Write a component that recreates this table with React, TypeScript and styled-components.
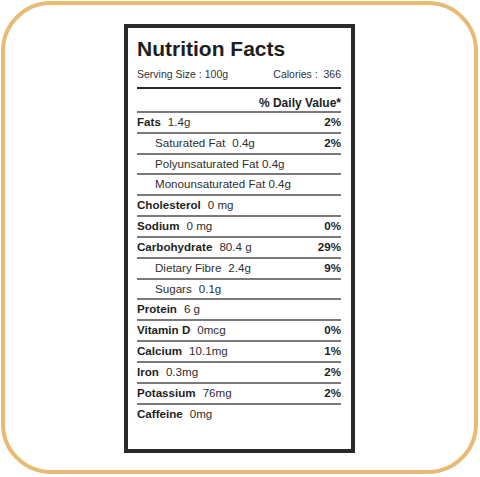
import React from "react";
import styled, { createGlobalStyle } from "styled-components";

type Nutrient = {
  name: string;
  amount: string;
  daily?: string;
  sub?: boolean;
  plain?: boolean;
};

const nutrients: Nutrient[] = [
  { name: "Fats", amount: "1.4g", daily: "2%" },
  { name: "Saturated Fat", amount: "0.4g", daily: "2%", sub: true },
  { name: "Polyunsaturated Fat 0.4g", amount: "", sub: true, plain: true },
  { name: "Monounsaturated Fat 0.4g", amount: "", sub: true, plain: true },
  { name: "Cholesterol", amount: "0 mg" },
  { name: "Sodium", amount: "0 mg", daily: "0%" },
  { name: "Carbohydrate", amount: "80.4 g", daily: "29%" },
  { name: "Dietary Fibre", amount: "2.4g", daily: "9%", sub: true },
  { name: "Sugars", amount: "0.1g", sub: true },
  { name: "Protein", amount: "6 g" },
  { name: "Vitamin D", amount: "0mcg", daily: "0%" },
  { name: "Calcium", amount: "10.1mg", daily: "1%" },
  { name: "Iron", amount: "0.3mg", daily: "2%" },
  { name: "Potassium", amount: "76mg", daily: "2%" },
  { name: "Caffeine", amount: "0mg" },
];

const App = () => {
  return (
    <>
      <GlobalStyle />
      <Frame>
        <Label>
          <Title>Nutrition Facts</Title>
          <Serving>
            <span>Serving Size : 100g</span>
            <span>Calories :&nbsp; 366</span>
          </Serving>
          <ThickRule />
          <DailyHead>% Daily Value*</DailyHead>
          {nutrients.map((n) => (
            <Row key={n.name} sub={n.sub}>
              <Left>
                {n.plain ? (
                  <Amount>{n.name}</Amount>
                ) : n.sub ? (
                  <>
                    <Amount>{n.name}</Amount>
                    <Amount gap>{n.amount}</Amount>
                  </>
                ) : (
                  <>
                    <Name>{n.name}</Name>
                    <Amount gap>{n.amount}</Amount>
                  </>
                )}
              </Left>
              {n.daily && <Daily>{n.daily}</Daily>}
            </Row>
          ))}
        </Label>
      </Frame>
    </>
  );
};

export default App;

const GlobalStyle = createGlobalStyle`
  body {
    margin: 0;
    background: #fff;
    font-family: "Liberation Sans", Arial, sans-serif;
  }
`;

const Frame = styled.div`
  box-sizing: border-box;
  margin: 1px 0 0 1px;
  width: 477px;
  height: 473px;
  border: 4px solid #e8bb74;
  border-radius: 50px;
  padding-top: 19px;
  display: flex;
  align-items: flex-start;
  justify-content: center;
`;

const Label = styled.div`
  box-sizing: border-box;
  width: 231px;
  height: 429px;
  border: 4px solid #2a2a2a;
  padding: 9px 10px 0 9px;
  display: flex;
  flex-direction: column;
  color: #1e1e1e;
`;

const Title = styled.h1`
  margin: 0;
  font-size: 21px;
  line-height: 24px;
  font-weight: 700;
`;

const Serving = styled.div`
  margin-top: 6px;
  display: flex;
  justify-content: space-between;
  font-size: 10.5px;
  line-height: 14px;
  color: #333;
`;

const ThickRule = styled.div`
  margin-top: 6px;
  height: 2px;
  background: #2a2a2a;
`;

const DailyHead = styled.div`
  box-sizing: border-box;
  height: 22px;
  padding-top: 7px;
  text-align: right;
  font-size: 12px;
  line-height: 14px;
  font-weight: 700;
`;

const Row = styled.div<{ sub?: boolean }>`
  display: flex;
  justify-content: space-between;
  align-items: center;
  height: 18.84px;
  border-top: 2px solid #7a7a7a;
  padding-left: ${(p) => (p.sub ? "18px" : "0")};
  font-size: 11.6px;
  line-height: 18.84px;
`;

const Left = styled.div`
  display: flex;
`;

const Name = styled.span`
  font-weight: 700;
`;

const Amount = styled.span<{ gap?: boolean }>`
  font-weight: 400;
  color: #2e2e2e;
  margin-left: ${(p) => (p.gap ? "7px" : "0")};
`;

const Daily = styled.span`
  font-weight: 700;
`;
